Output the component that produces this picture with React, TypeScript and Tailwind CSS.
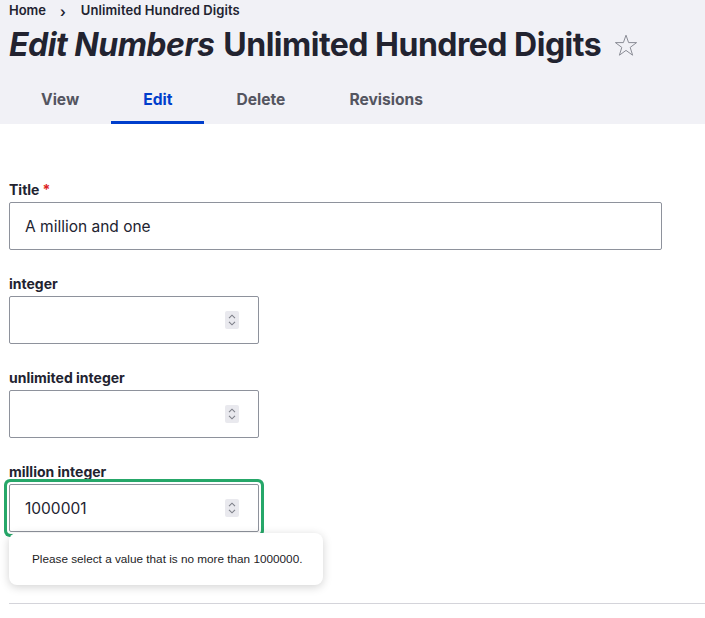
import React from 'react';

const font = { fontFamily: 'Inter, "Noto Sans", sans-serif' };

const Spinner: React.FC = () => (
  <div className="absolute right-[19px] top-1/2 -translate-y-1/2 w-[14px] h-[18px] bg-[#e9e9ee] rounded-[2px] flex flex-col items-center justify-center gap-[2px]">
    <svg width="8" height="5" viewBox="0 0 8 5" fill="none" stroke="#7d7f88" strokeWidth="1.1">
      <path d="M1 4.2 L4 1.2 L7 4.2" />
    </svg>
    <svg width="8" height="5" viewBox="0 0 8 5" fill="none" stroke="#7d7f88" strokeWidth="1.1">
      <path d="M1 0.8 L4 3.8 L7 0.8" />
    </svg>
  </div>
);

const Star: React.FC = () => (
  <svg width="24" height="23" viewBox="0 0 24 23" fill="none" stroke="#8b8d96" strokeWidth="1" strokeLinejoin="miter">
    <path d="M12 1.2 L14.6 8.6 L22.6 8.6 L16.2 13.4 L18.6 21.2 L12 16.4 L5.4 21.2 L7.8 13.4 L1.4 8.6 L9.4 8.6 Z" />
  </svg>
);

interface FieldProps {
  label: string;
  value?: string;
  wide?: boolean;
  required?: boolean;
  number?: boolean;
  focused?: boolean;
  className?: string;
}

const Field: React.FC<FieldProps> = ({ label, value, wide, required, number, focused, className }) => (
  <div className={className}>
    <label className="block text-[14px] leading-[18px] font-bold text-[#222330] mb-[3px]">
      {label}
      {required && <span className="text-[#dc2323] ml-[3px]">*</span>}
    </label>
    <div
      className={`relative h-[48px] border border-[#8e929c] rounded-[2px] bg-white flex items-center pl-[15px] pt-[1px] text-[15.5px] text-[#222330] ${
        wide ? 'w-[653px]' : 'w-[250px]'
      } ${focused ? 'shadow-[0_0_0_2px_#ffffff,0_0_0_5px_#26a769]' : ''}`}
    >
      {value}
      {number && <Spinner />}
    </div>
  </div>
);

const tabs = ['View', 'Edit', 'Delete', 'Revisions'];

export default function App() {
  return (
    <div className="relative w-[705px] h-[618px] bg-white overflow-hidden" style={font}>
      <div className="bg-[#f1f1f6] pl-[9px]">
        <div className="flex items-center h-[22px] text-[13px] font-semibold text-[#222330]">
          <span>Home</span>
          <span className="ml-[14px] mr-[15px] text-[14px]">›</span>
          <span className="tracking-[0.1px]">Unlimited Hundred Digits</span>
        </div>
        <h1 className="flex items-center mt-[3px] h-[40px] text-[32px] font-bold text-[#222330] tracking-[-0.5px]">
          <em>Edit Numbers</em>
          <span className="ml-[9px]">Unlimited Hundred Digits</span>
          <span className="ml-[13px] flex items-center">
            <Star />
          </span>
        </h1>
        <nav className="flex mt-[11px]">
          {tabs.map((t) => (
            <div
              key={t}
              className={`h-[48px] px-8 pt-[2px] flex items-center text-[15.6px] font-bold border-b-[3px] ${
                t === 'Edit' ? 'text-[#003ecc] border-[#003ecc]' : 'text-[#545560] border-transparent'
              }`}
            >
              {t}
            </div>
          ))}
        </nav>
      </div>

      <form className="pl-[9px] pt-[57px]">
        <Field label="Title" value="A million and one" wide required />
        <Field label="integer" number className="mt-[25px]" />
        <Field label="unlimited integer" number className="mt-[25px]" />
        <Field label="million integer" value="1000001" number focused className="mt-[25px]" />
      </form>

      <div
        className="absolute left-[9px] top-[533px] w-[314px] h-[52px] bg-white rounded-[8px] shadow-[0_2px_10px_rgba(0,0,0,0.18)] flex items-center pl-[23px] text-[11.75px] text-[#1d1d1f]"
        style={{ fontFamily: '"Liberation Sans", Arial, sans-serif' }}
      >
        Please select a value that is no more than 1000000.
      </div>

      <div className="absolute left-[9px] right-0 top-[603px] h-px bg-[#d4d4da]" />
    </div>
  );
}
